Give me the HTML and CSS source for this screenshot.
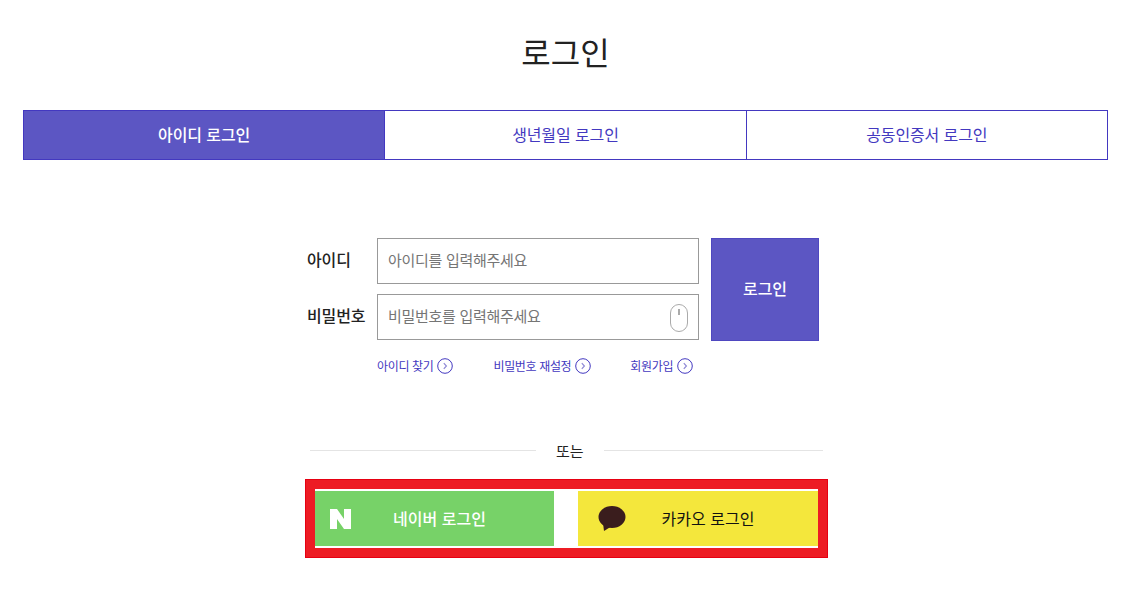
FILE: index.html
```html
<!DOCTYPE html>
<html lang="ko">
<head>
  <meta charset="utf-8">
  <title>로그인</title>
  <link rel="stylesheet" href="styles.css">
</head>
<body>
  <h1 class="page-title">로그인</h1>

  <div class="tabs">
    <a class="tab active">아이디 로그인</a>
    <a class="tab">생년월일 로그인</a>
    <a class="tab">공동인증서 로그인</a>
  </div>

  <div class="login-form">
    <div class="form-row">
      <div class="fields">
        <div class="field">
          <label class="field-label">아이디</label>
          <div class="input-box"><span class="placeholder">아이디를 입력해주세요</span></div>
        </div>
        <div class="field">
          <label class="field-label">비밀번호</label>
          <div class="input-box">
            <span class="placeholder">비밀번호를 입력해주세요</span>
            <svg class="mouse-icon" width="20" height="30" viewBox="0 0 20 30">
              <rect x="1.5" y="1.5" width="17" height="27" rx="8.5" fill="#fff" stroke="#aaa" stroke-width="1"/>
              <rect x="9" y="6" width="2" height="6" fill="#aaa"/>
            </svg>
          </div>
        </div>
      </div>
      <button class="login-btn">로그인</button>
    </div>

    <div class="help-links">
      <a class="help-link link-id">아이디 찾기
        <svg width="16" height="16" viewBox="0 0 16 16"><circle cx="8" cy="8" r="7.3" fill="none" stroke="#4338c0"/><path d="M6.8 5.2 9.4 8 6.8 10.8" fill="none" stroke="#8f8ad6" stroke-width="1.2"/></svg>
      </a>
      <a class="help-link link-pw">비밀번호 재설정
        <svg width="16" height="16" viewBox="0 0 16 16"><circle cx="8" cy="8" r="7.3" fill="none" stroke="#4338c0"/><path d="M6.8 5.2 9.4 8 6.8 10.8" fill="none" stroke="#8f8ad6" stroke-width="1.2"/></svg>
      </a>
      <a class="help-link">회원가입
        <svg width="16" height="16" viewBox="0 0 16 16"><circle cx="8" cy="8" r="7.3" fill="none" stroke="#4338c0"/><path d="M6.8 5.2 9.4 8 6.8 10.8" fill="none" stroke="#8f8ad6" stroke-width="1.2"/></svg>
      </a>
    </div>
  </div>

  <div class="divider"><span>또는</span></div>

  <div class="social-box">
    <a class="social naver">
      <svg class="naver-icon" width="21" height="20" viewBox="0 0 21 20"><path d="M0 0H7L14 10V0H21V20H14L7 10V20H0Z" fill="#fff"/></svg>
      네이버 로그인
    </a>
    <a class="social kakao">
      <svg class="kakao-icon" width="28" height="25" viewBox="0 0 28 25"><ellipse cx="14" cy="11" rx="13.5" ry="11" fill="#3a1d1d"/><path d="M5 17 6 25 14 20Z" fill="#3a1d1d"/></svg>
      카카오 로그인
    </a>
  </div>
</body>
</html>
```

FILE: styles.css
```css
* {
  box-sizing: border-box;
}

body {
  margin: 0;
  padding: 0 36px 0 23px;
  background-color: #fff;
  color: #222;
  font-family: "Noto Sans CJK KR", "Noto Sans", sans-serif;
}

.page-title {
  margin: 0;
  height: 110px;
  padding-top: 26px;
  font-size: 32px;
  font-weight: 400;
  line-height: 50px;
  text-align: center;
  color: #222;
}

.tabs {
  display: flex;
  height: 50px;
  width: 1085px;
  border: 1px solid #4338c0;
}

.tab {
  flex: 1;
  display: flex;
  align-items: center;
  justify-content: center;
  padding-bottom: 2px;
  font-size: 16px;
  letter-spacing: -0.1px;
  color: #4338c0;
  background-color: #fff;
  border-left: 1px solid #4338c0;
}

.tab.active {
  border-left: 0;
  background-color: #5c56c3;
  color: #fff;
  font-weight: 500;
}

.login-form {
  width: 512px;
  margin: 78px 0 0 284px;
}

.form-row {
  display: flex;
  gap: 12px;
}

.fields {
  display: flex;
  flex-direction: column;
  gap: 10px;
}

.field {
  display: flex;
  align-items: center;
}

.field-label {
  width: 70px;
  padding-bottom: 4px;
  font-size: 16px;
  font-weight: 500;
  letter-spacing: -0.1px;
  color: #222;
}

.input-box {
  position: relative;
  display: flex;
  align-items: center;
  width: 322px;
  height: 46px;
  padding: 0 0 4px 10px;
  border: 1px solid #999;
  background-color: #fff;
}

.placeholder {
  font-size: 15px;
  letter-spacing: -0.3px;
  color: #757575;
}

.mouse-icon {
  position: absolute;
  right: 9px;
  top: 8px;
}

.login-btn {
  width: 108px;
  height: 103px;
  padding: 0 0 4px;
  border: 1px solid #4f48c0;
  background-color: #5c56c3;
  color: #fff;
  font-family: inherit;
  font-size: 16px;
  font-weight: 500;
}

.help-links {
  display: flex;
  margin: 16px 0 0 70px;
}

.help-link {
  display: flex;
  align-items: center;
  gap: 4px;
  font-size: 12px;
  letter-spacing: -0.35px;
  color: #4338c0;
}

.link-id {
  margin-right: 40px;
}

.link-pw {
  margin-right: 39px;
}

.divider {
  display: flex;
  align-items: center;
  gap: 20px;
  width: 513px;
  margin: 66px 0 0 287px;
  font-size: 15px;
  color: #222;
}

.divider::before,
.divider::after {
  content: "";
  flex: 1;
  height: 1px;
  background-color: #e4e4e4;
}

.divider::before {
  flex: none;
  width: 226px;
}

.social-box {
  display: flex;
  justify-content: space-between;
  align-items: center;
  width: 523px;
  height: 79px;
  margin: 18px 0 0 282px;
  border: 10px solid #ed1c24;
  outline: 1px solid #e60012;
  outline-offset: -1px;
  background-color: #fff;
}

.social {
  position: relative;
  display: flex;
  align-items: center;
  justify-content: center;
  height: 55px;
  padding-bottom: 2px;
  font-size: 16px;
}

.naver {
  width: 239px;
  padding-left: 10px;
  background-color: #77d268;
  color: #fff;
  font-weight: 500;
}

.kakao {
  width: 240px;
  padding-left: 20px;
  background-color: #f4e73c;
  color: #111;
}

.naver-icon {
  position: absolute;
  left: 15px;
  top: 18px;
}

.kakao-icon {
  position: absolute;
  left: 20px;
  top: 15px;
}
```
